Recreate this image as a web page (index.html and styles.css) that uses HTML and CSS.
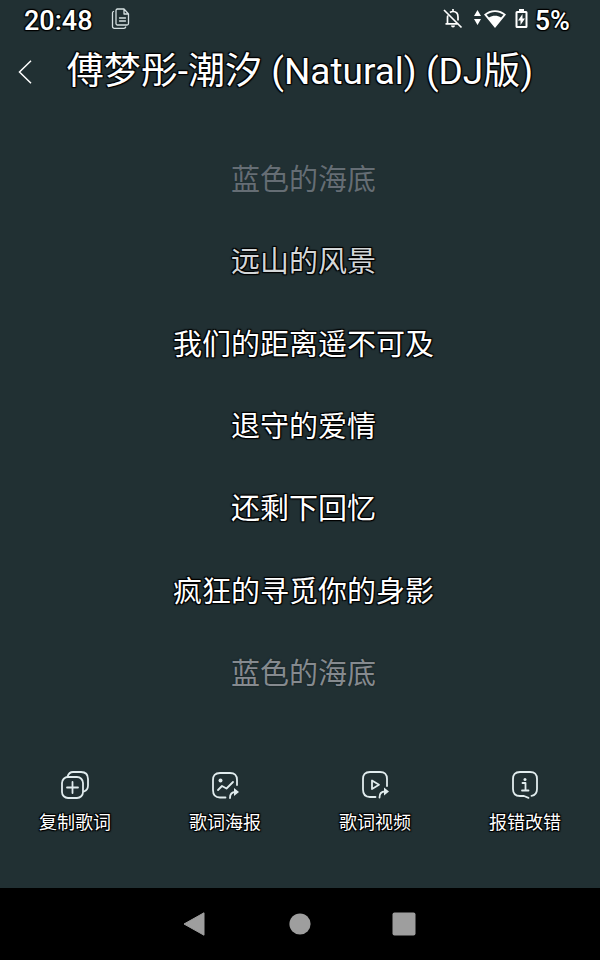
FILE: index.html
```html
<!DOCTYPE html>
<html lang="zh-CN">
<head>
<meta charset="utf-8">
<meta name="viewport" content="width=device-width, initial-scale=1">
<title>傅梦彤-潮汐 (Natural) (DJ版)</title>
<link rel="stylesheet" href="styles.css">
</head>
<body>
<div class="screen">
  <div class="status">
    <time class="clock">20:48</time>
    <svg class="copy-icon" width="20" height="22" viewBox="0 0 20 22" fill="none" stroke="currentColor" stroke-width="1.3" stroke-linejoin="round" stroke-linecap="round" aria-hidden="true">
      <path d="M6 1h7l4.500 5v9.500a1.500 1.500 0 0 1-1.500 1.500H6.500A1.500 1.500 0 0 1 5 15.500V2.500A1.500 1.500 0 0 1 6.500 1M13 1v5h4.500M2.500 3.500A1.500 1.500 0 0 0 1.500 5v13.500A1.800 1.800 0 0 0 3.300 20.300H13a1.800 1.800 0 0 0 1.700-1.300M8.500 10h6M8.500 13h6"/>
    </svg>
    <div class="indicators">
      <svg width="22" height="22" viewBox="0 0 22 22" fill="none" stroke="currentColor" stroke-width="1.700" aria-hidden="true">
        <path d="M8 4.500C9 3.700 9.800 3.500 11 3.500c3 0 5 2.200 5 5.500v3.500M5.800 7.500C5.500 8.300 5.500 9 5.500 10v5.500M3.500 15.800h13M11 1v2.500M2 2l17.500 17.500"/>
        <path d="M9 17.500h4a2 2 0 0 1-4 0z" fill="currentColor" stroke="none"/>
      </svg>
      <svg class="wifi" width="33" height="22" viewBox="0 0 33 22" fill="currentColor" aria-hidden="true">
        <path d="M0 8l3.500-6L7 8zM0 11h7l-3.500 6z"/>
        <path fill-rule="evenodd" d="M10 6.500C16 .8 26 .8 32 6.500L21 20zM12.500 6.800l2.500 2.700c3.500-2.300 8.500-2.300 12 0l2.500-2.700c-5-3.900-12-3.900-17 0z"/>
      </svg>
      <svg class="battery" width="13" height="22" viewBox="0 0 13 22" aria-hidden="true">
        <path fill="currentColor" fill-rule="evenodd" d="M4 1h5v2h2a1.500 1.500 0 0 1 1.500 1.500v14a1.500 1.500 0 0 1-1.500 1.500H2A1.500 1.500 0 0 1 .5 18.500v-14A1.500 1.500 0 0 1 2 3h2zM2.500 5v13h8V5zM7.500 6v4.500H10L5.500 17v-4.500H3z"/>
      </svg>
      <span class="percent">5%</span>
    </div>
  </div>

  <header class="header">
    <button class="back" type="button" aria-label="返回">
      <svg width="14" height="24" viewBox="0 0 14 24" fill="none" stroke="currentColor" stroke-width="1.500" aria-hidden="true"><path d="M13 .8L1.500 12 13 23.200"/></svg>
    </button>
    <h1 class="title">傅梦彤-潮汐 (Natural) (DJ版)</h1>
  </header>

  <main class="lyrics">
    <p class="line faint">蓝色的海底</p>
    <p class="line soft">远山的风景</p>
    <p class="line">我们的距离遥不可及</p>
    <p class="line">退守的爱情</p>
    <p class="line">还剩下回忆</p>
    <p class="line">疯狂的寻觅你的身影</p>
    <p class="line dim">蓝色的海底</p>
  </main>

  <div class="actions">
    <button class="action" type="button">
      <svg class="action-icon" viewBox="0 0 28 28" aria-hidden="true">
        <path d="M6.500 5.500C7.500 2.500 9.500 1 12 1h8c4.500 0 7 2.500 7 7v6.500c0 3-1.500 5-4 6"/>
        <rect x="1" y="6" width="21" height="21" rx="6"/>
        <path d="M11.500 11v11M6 16.500h11"/>
      </svg>
      <span>复制歌词</span>
    </button>
    <button class="action" type="button">
      <svg class="action-icon" viewBox="0 0 28 28" aria-hidden="true">
        <path d="M26 14V9c0-5-2.500-7-7-7H9C4 2 2 4.500 2 9v10c0 5 2 7.500 7 7.500h5.500"/>
        <circle class="solid" cx="9.500" cy="9.500" r="2"/>
        <path d="M7 19l4-4 4.500 2.500L22 11M19 27c0-4 1.500-6 5.500-6"/>
        <path class="solid" d="M23 17l5 4-5 4z"/>
      </svg>
      <span>歌词海报</span>
    </button>
    <button class="action" type="button">
      <svg class="action-icon" viewBox="0 0 28 28" aria-hidden="true">
        <path d="M26 15V8c0-5-2.500-7-7-7H9C4 1 2 3.500 2 8v10.500c0 5 2 7.500 7 7.500h5.500"/>
        <path d="M11 9.500v8.500l7-4.200zM18.500 26.500c0-4 1.500-6 5.500-6"/>
        <path class="solid" d="M23 16.500l5 4-5 4z"/>
      </svg>
      <span>歌词视频</span>
    </button>
    <button class="action" type="button">
      <svg class="action-icon" viewBox="0 0 28 28" aria-hidden="true">
        <path d="M20.500 24.800c3.700-.5 5.500-2.800 5.500-6.800V8c0-5-2.500-7-7-7H9C4 1 2 3.500 2 8v10c0 5 2 7 7 7h4l4.500 1.800"/>
        <circle class="solid" cx="14" cy="8.500" r="1.500"/>
        <path d="M11.500 12h3v7.500M11 19.500h6.500"/>
      </svg>
      <span>报错改错</span>
    </button>
  </div>

  <nav class="system-nav">
    <button class="key" type="button" aria-label="后退"><svg width="24" height="24" viewBox="0 0 24 24" aria-hidden="true"><path d="M20 .8v22.400L0 12z" stroke="currentColor" stroke-linejoin="round" fill="currentColor"/></svg></button>
    <button class="key" type="button" aria-label="主屏幕"><svg width="24" height="24" viewBox="0 0 24 24" aria-hidden="true"><circle cx="12" cy="12" r="10.600" fill="currentColor"/></svg></button>
    <button class="key" type="button" aria-label="最近任务"><svg width="24" height="24" viewBox="0 0 24 24" aria-hidden="true"><rect x=".5" y=".5" width="23" height="23" rx="2" fill="currentColor"/></svg></button>
  </nav>
</div>
</body>
</html>
```
FILE: styles.css
```css
* {
  box-sizing: border-box;
}

body {
  margin: 0;
  background: #213033;
  color: #fff;
  font-family: Roboto, "Noto Sans CJK SC", sans-serif;
}

button {
  padding: 0;
  border: 0;
  background: none;
  color: inherit;
  font: inherit;
}

svg {
  display: block;
  flex: none;
  overflow: visible;
}

.screen {
  display: flex;
  flex-direction: column;
  min-height: 100vh;
  text-shadow: 0 0 2px #000, 1px 1px 1px #000, -1px -1px 1px #000, 1px -1px 1px #000, -1px 1px 1px #000;
}

.status {
  display: flex;
  align-items: center;
  height: 42px;
  padding: 0 30px 0 24px;
  font-size: 27px;
  font-weight: 500;
}

.copy-icon {
  margin: 0 0 4px 18px;
  color: #d5dfe1;
}

.indicators {
  display: flex;
  align-items: center;
  margin-left: auto;
}

.indicators svg {
  margin-bottom: 4px;
}

.wifi {
  margin-left: 10px;
}

.battery {
  margin: 0 7px 0 8px;
}

.header {
  display: grid;
  grid-template-columns: 50px 1fr 50px;
  align-items: center;
  height: 58px;
}

.back {
  display: grid;
  place-items: center;
  height: 56px;
}

.title {
  margin: 0;
  font-size: 37px;
  font-weight: 400;
  line-height: 60px;
  text-align: center;
  white-space: nowrap;
}

.lyrics {
  display: grid;
  flex: 1;
  grid-auto-rows: 1fr;
  align-items: center;
  padding: 36px 0 0 7px;
  font-size: 29px;
  text-align: center;
}

.line {
  margin: 0;
}

.faint {
  color: #656d74;
  text-shadow: 0 0 1px #1b282a;
}

.soft {
  color: #d3d6d8;
}

.dim {
  color: #858a8f;
  text-shadow: 0 0 2px #101819;
}

.actions {
  display: grid;
  grid-template-columns: repeat(4, 1fr);
  padding: 59px 0 52px;
}

.action {
  display: flex;
  flex-direction: column;
  align-items: center;
  gap: 10px;
  font-size: 18px;
  line-height: 27px;
  text-shadow: inherit;
}

.action-icon {
  width: 28px;
  height: 28px;
  fill: none;
  stroke: #e1ecee;
  stroke-width: 1.8px;
  stroke-linecap: round;
  stroke-linejoin: round;
}

.action-icon .solid {
  fill: #e1ecee;
  stroke: none;
}

.system-nav {
  display: flex;
  justify-content: center;
  align-items: center;
  gap: 80px;
  height: 72px;
  background: #000;
}

.key {
  color: #9e9e9e;
}
```
